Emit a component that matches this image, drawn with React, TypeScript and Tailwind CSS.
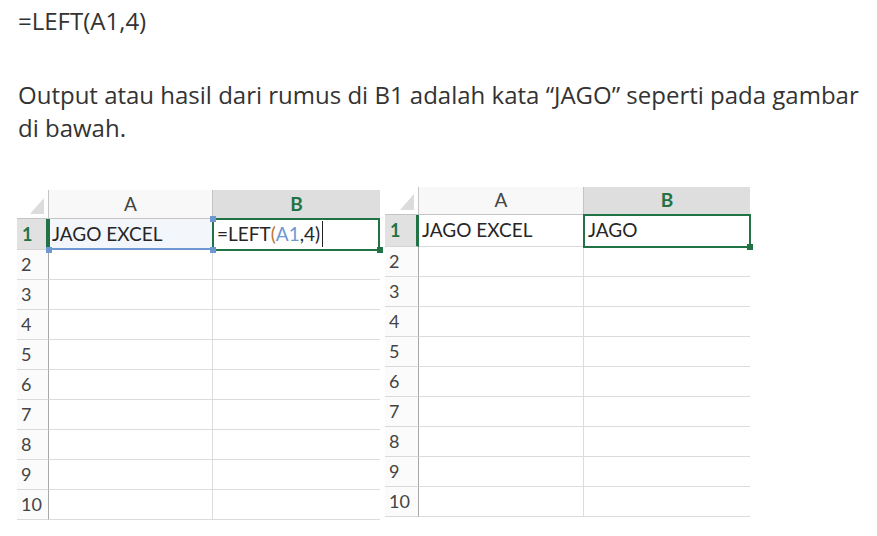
import React from "react";

const ROWS = [2, 3, 4, 5, 6, 7, 8, 9, 10];

function Corner() {
  return (
    <svg width="14" height="16" viewBox="0 0 14 16" className="absolute right-[4px] bottom-[4px]">
      <polygon points="14,0 14,16 0,16" fill="#dcdcdc" />
    </svg>
  );
}

function Handle({ className }: { className: string }) {
  return <div className={`absolute w-[6px] h-[6px] ${className}`} />;
}

type SheetProps = {
  headW: string;
  aW: string;
  bW: string;
  headH: string;
  row1H: string;
  a1: React.ReactNode;
  b1: React.ReactNode;
  a1Bg?: string;
  children?: React.ReactNode;
  className?: string;
};

function Sheet({ headW, aW, bW, headH, row1H, a1, b1, a1Bg = "", children, className = "" }: SheetProps) {
  return (
    <div className={`relative flex flex-col text-[#262626] font-['Lato',sans-serif] ${className}`}>
      <div className={`flex ${headH}`}>
        <div className={`relative ${headW} bg-white border-b border-r border-[#c4c4c4]`}>
          <Corner />
        </div>
        <div className={`${aW} bg-[#f8f8f8] border-b border-r border-[#c4c4c4] flex items-center justify-center text-[19px] text-[#444]`}>
          A
        </div>
        <div className={`${bW} bg-[#dedede] border-b border-[#c4c4c4] flex items-center justify-center text-[19px] font-bold text-[#217346]`}>
          B
        </div>
      </div>
      <div className={`flex ${row1H}`}>
        <div className={`${headW} bg-[#e1e1e1] border-b border-r-[3px] border-b-[#d4d4d4] border-r-[#217346] flex items-center pl-[5px] text-[18px] font-bold text-[#217346]`}>
          1
        </div>
        <div className={`${aW} ${a1Bg} border-b border-r border-[#d9d9d9] flex items-center pl-[3px] text-[19px]`}>
          {a1}
        </div>
        <div className={`${bW} border-b border-[#d9d9d9] flex items-center pl-[4px] text-[19px]`}>{b1}</div>
      </div>
      {ROWS.map((n) => (
        <div key={n} className="flex h-[30px]">
          <div className={`${headW} bg-[#fbfbfb] border-b border-r border-b-[#d9d9d9] border-r-[#a8a8a8] flex items-center pl-[4px] text-[18px] text-[#444]`}>
            {n}
          </div>
          <div className={`${aW} border-b border-r border-[#dcdcdc]`} />
          <div className={`${bW} border-b border-[#dcdcdc]`} />
        </div>
      ))}
      {children}
    </div>
  );
}

export default function App() {
  return (
    <div className="w-[877px] h-[536px] bg-white overflow-hidden pt-[4px]">
      <p className="pl-[18px] text-[24px] leading-[33px] text-[#333] font-['Open_Sans',sans-serif]">=LEFT(A1,4)</p>
      <p className="pl-[18px] mt-[41px] text-[24px] leading-[33px] text-[#333] font-['Open_Sans',sans-serif]">
        Output atau hasil dari rumus di B1 adalah kata “JAGO” seperti pada gambar di bawah.
      </p>
      <div className="flex items-start gap-[5px] pl-[17px] mt-[43px]">
        <Sheet
          className="mt-[3px]"
          headW="w-[32px]"
          aW="w-[164px]"
          bW="w-[167px]"
          headH="h-[29px]"
          row1H="h-[31px]"
          a1Bg="bg-[#f3f6fb]"
          a1="JAGO EXCEL"
          b1={
            <span className="relative flex items-center h-full">
              =LEFT<span className="text-[#b8782e]">(</span>
              <span className="text-[#6e98d2]">A1</span>,4)
              <span className="ml-[2px] w-[1px] h-[26px] bg-[#222]" />
            </span>
          }
        >
          <div className="absolute left-[31px] top-[29px] w-[2px] h-[31px] bg-[#217346]" />
          <div className="absolute left-[32px] top-[58px] w-[164px] h-[2px] bg-[#6e98d2]" />
          <div className="absolute left-[195px] top-[28px] w-[168px] h-[33px] border-2 border-[#217346]" />
          <Handle className="left-[29px] top-[57px] bg-[#6e98d2]" />
          <Handle className="left-[193px] top-[26px] bg-[#6e98d2]" />
          <Handle className="left-[193px] top-[57px] bg-[#6e98d2]" />
          <Handle className="left-[360px] top-[57px] bg-[#217346]" />
        </Sheet>
        <Sheet
          headW="w-[34px]"
          aW="w-[165px]"
          bW="w-[166px]"
          headH="h-[28px]"
          row1H="h-[32px]"
          a1="JAGO EXCEL"
          b1="JAGO"
        >
          <div className="absolute left-[198px] top-[27px] w-[168px] h-[34px] border-2 border-[#217346]" />
          <Handle className="left-[362px] top-[57px] bg-[#217346]" />
        </Sheet>
      </div>
    </div>
  );
}
